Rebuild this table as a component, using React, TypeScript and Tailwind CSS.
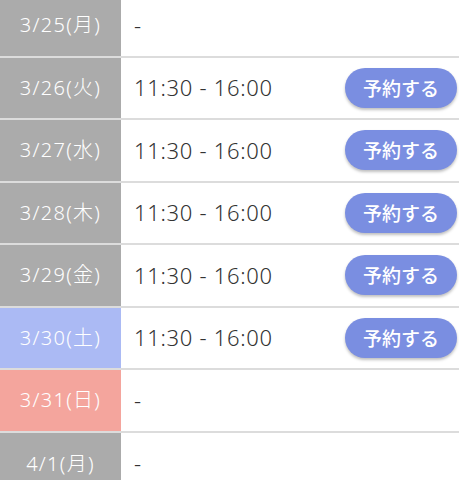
const days = [
  { date: "3/25(月)", time: "", kind: "weekday" },
  { date: "3/26(火)", time: "11:30 - 16:00", kind: "weekday" },
  { date: "3/27(水)", time: "11:30 - 16:00", kind: "weekday" },
  { date: "3/28(木)", time: "11:30 - 16:00", kind: "weekday" },
  { date: "3/29(金)", time: "11:30 - 16:00", kind: "weekday" },
  { date: "3/30(土)", time: "11:30 - 16:00", kind: "sat" },
  { date: "3/31(日)", time: "", kind: "sun" },
  { date: "4/1(月)", time: "", kind: "weekday" },
];

const bg: Record<string, string> = {
  weekday: "bg-[#ababab]",
  sat: "bg-[#abbaf4]",
  sun: "bg-[#f4a59d]",
};

export default function App() {
  return (
    <div
      className="w-[459px] h-[480px] overflow-hidden bg-white"
      style={{ fontFamily: '"Noto Sans", "Noto Sans CJK JP", sans-serif' }}
    >
      <div className="-mt-[5px]">
        {days.map((d, i) => (
          <div
            key={i}
            className={`flex h-[62.5px] box-border ${i < days.length - 1 ? "border-b-2 border-[#dcdcdc]" : ""}`}
          >
            <div
              className={`w-[121px] shrink-0 flex items-center justify-center text-white text-[20px] font-light tracking-[1.3px] ${bg[d.kind]}`}
            >
              {d.date}
            </div>
            <div className="flex-1 flex items-center justify-between pl-[13px] pr-[2px]">
              <span className="text-[22px] font-light tracking-[0.7px] text-[#333]">{d.time || "-"}</span>
              {d.time && (
                <button
                  className="w-[112px] h-[40px] rounded-full bg-[#7a8ee1] text-white text-[19px] font-medium shadow-[0_2px_3px_rgba(0,0,0,0.25)]"
                  style={{ fontFamily: '"Noto Sans CJK JP", sans-serif' }}
                >
                  予約する
                </button>
              )}
            </div>
          </div>
        ))}
      </div>
    </div>
  );
}
